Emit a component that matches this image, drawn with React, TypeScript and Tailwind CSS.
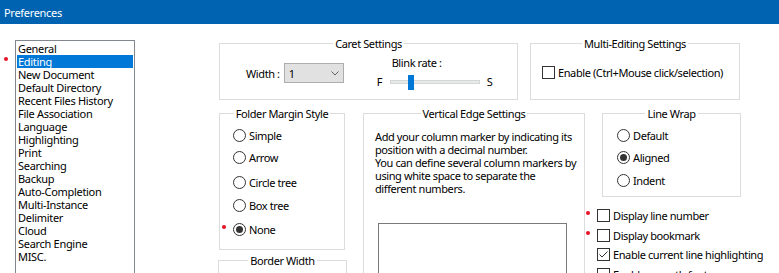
import type { ReactNode } from 'react'

const pages = [
  'General',
  'Editing',
  'New Document',
  'Default Directory',
  'Recent Files History',
  'File Association',
  'Language',
  'Highlighting',
  'Print',
  'Searching',
  'Backup',
  'Auto-Completion',
  'Multi-Instance',
  'Delimiter',
  'Cloud',
  'Search Engine',
  'MISC.',
]

const folderStyles = [
  { label: 'Simple', mt: 'mt-[9px]' },
  { label: 'Arrow', mt: 'mt-[9px]' },
  { label: 'Circle tree', mt: 'mt-[12px]' },
  { label: 'Box tree', mt: 'mt-[10px]' },
  { label: 'None', mt: 'mt-[11px]', on: true, mark: true },
]

const wraps = [
  { label: 'Default', mt: 'mt-[9px]' },
  { label: 'Aligned', mt: 'mt-[9px]', on: true },
  { label: 'Indent', mt: 'mt-[10px]' },
]

const toggles = [
  { label: 'Display line number', mt: 'mt-[12px]', mark: true },
  { label: 'Display bookmark', mt: 'mt-[7px]', mark: true },
  { label: 'Enable current line highlighting', mt: 'mt-[6px]', on: true },
  { label: 'Enable smooth font', mt: 'mt-[7px]' },
]

function Dot() {
  return <span className="absolute -left-[11px] top-[2px] h-[4px] w-[4px] rounded-full bg-[#e81123]" />
}

function Group({ title, className, children }: { title: string; className: string; children?: ReactNode }) {
  return (
    <div className={`border border-[#dcdcdc] ${className}`}>
      <div className="-mt-[7px] flex justify-center">
        <span className="bg-white px-[2px]">{title}</span>
      </div>
      {children}
    </div>
  )
}

function Radio({ label, on, mark, className }: { label: string; on?: boolean; mark?: boolean; className: string }) {
  return (
    <div className={`relative flex h-[13px] items-center gap-[3px] ${className}`}>
      {mark && <Dot />}
      <span className="flex h-[13px] w-[13px] flex-none items-center justify-center rounded-full border border-[#333333] bg-white">
        {on && <span className="h-[7px] w-[7px] rounded-full bg-[#333333]" />}
      </span>
      <span>{label}</span>
    </div>
  )
}

function Check({ label, on, mark, className }: { label: string; on?: boolean; mark?: boolean; className: string }) {
  return (
    <div className={`relative flex h-[13px] items-center gap-[3px] whitespace-nowrap ${className}`}>
      {mark && <Dot />}
      <span className="flex h-[13px] w-[13px] flex-none items-center justify-center border border-[#333333] bg-white">
        {on && (
          <svg width="11" height="11" viewBox="0 0 11 11">
            <polyline points="1.5,5.5 4,8 9.5,2.5" fill="none" stroke="#333333" strokeWidth="1" />
          </svg>
        )}
      </span>
      <span>{label}</span>
    </div>
  )
}

export default function App() {
  return (
    <div className="h-[273px] w-[779px] overflow-hidden bg-white font-['Noto_Sans',sans-serif] text-[11px] leading-[13px] tracking-[-0.4px] text-black">
      <div className="flex h-[24px] items-center bg-[#0063b1] pl-[4px] tracking-[-0.3px] text-white">Preferences</div>

      <div className="flex items-start">
        {/* category list */}
        <div className="pl-[15px] pt-[16px]">
          <div className="relative h-[240px] w-[120px] border border-[#828790] pt-[1px] tracking-[-0.3px]">
            {pages.map((p, i) => (
              <div
                key={p}
                className={`relative mx-[1px] h-[13px] pl-[1px] ${i === 1 ? 'bg-[#0078d7] text-white' : ''}`}
              >
                {i === 1 && <span className="absolute -left-[13px] top-[2px] h-[4px] w-[4px] rounded-full bg-[#e81123]" />}
                {p}
              </div>
            ))}
          </div>
        </div>

        {/* settings */}
        <div className="ml-[83px] pt-[19px]">
          <div className="flex items-start">
            <Group title="Caret Settings" className="ml-[1px] h-[57px] w-[299px]">
              <div className="flex items-start">
                <div className="ml-[26px] mt-[13px] flex items-center gap-[4px]">
                  <span>Width :</span>
                  <div className="flex h-[20px] w-[60px] items-center justify-between border border-[#adadad] bg-[#e1e1e1] pl-[4px] pr-[4px]">
                    <span>1</span>
                    <svg width="8" height="5" viewBox="0 0 8 5">
                      <polyline points="0.5,0.5 4,4 7.5,0.5" fill="none" stroke="#606060" strokeWidth="1" />
                    </svg>
                  </div>
                </div>
                <div className="ml-[33px] mt-[6px] flex flex-col">
                  <span className="pl-[15px]">Blink rate :</span>
                  <div className="mt-[5px] flex h-[15px] items-center">
                    <span className="w-[13px]">F</span>
                    <div className="relative h-[4px] w-[90px] border border-[#d6d6d6] bg-[#e7eaea]">
                      <span className="absolute left-[17px] -top-[6px] h-[15px] w-[6px] bg-[#0078d7]" />
                    </div>
                    <span className="ml-[7px]">S</span>
                  </div>
                </div>
              </div>
            </Group>

            <Group title="Multi-Editing Settings" className="ml-[12px] h-[57px] w-[210px]">
              <Check label="Enable (Ctrl+Mouse click/selection)" className="ml-[11px] mt-[16px]" />
            </Group>
          </div>

          <div className="mt-[13px] flex items-start">
            <div className="flex w-[129px] flex-col">
              <Group title="Folder Margin Style" className="ml-[1px] h-[137px] w-[126px]">
                <div className="ml-[13px]">
                  {folderStyles.map((f) => (
                    <Radio key={f.label} label={f.label} on={f.on} mark={f.mark} className={f.mt} />
                  ))}
                </div>
              </Group>
              <Group title="Border Width" className="mt-[10px] h-[40px] w-[129px]" />
            </div>

            <Group title="Vertical Edge Settings" className="ml-[16px] h-[170px] w-[222px]">
              <p className="mt-[10px] pl-[11px]">
                Add your column marker by indicating its
                <br />
                position with a decimal number.
                <br />
                You can define several column markers by
                <br />
                using white space to separate the
                <br />
                different numbers.
              </p>
              <div className="ml-[14px] mt-[28px] h-[60px] w-[189px] border border-[#7a7a7a]" />
            </Group>

            <div className="ml-[12px] flex flex-col">
              <Group title="Line Wrap" className="ml-[5px] h-[84px] w-[139px]">
                <div className="ml-[14px]">
                  {wraps.map((w) => (
                    <Radio key={w.label} label={w.label} on={w.on} className={w.mt} />
                  ))}
                </div>
              </Group>
              {toggles.map((t) => (
                <Check key={t.label} label={t.label} on={t.on} mark={t.mark} className={t.mt} />
              ))}
            </div>
          </div>
        </div>
      </div>
    </div>
  )
}
